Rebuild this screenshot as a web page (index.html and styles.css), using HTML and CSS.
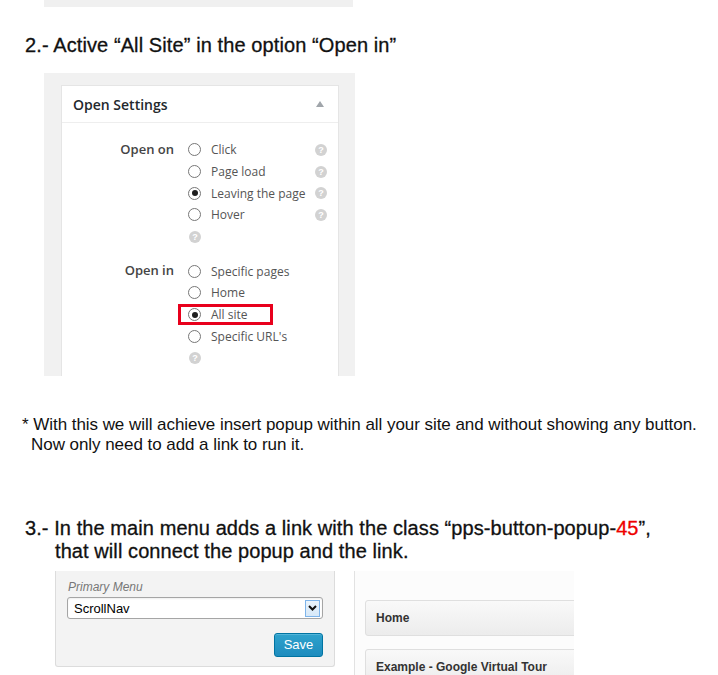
FILE: index.html
```html
<!DOCTYPE html>
<html>
<head>
<meta charset="utf-8">
<link rel="stylesheet" href="styles.css">
</head>
<body>
<div class="topbar"></div>

<h2 class="step">2.- Active “All Site” in the option “Open in”</h2>

<div class="shot shot-settings">
  <div class="postbox">
    <div class="postbox-head">
      <h3>Open Settings</h3>
      <span class="toggle"></span>
    </div>
    <div class="postbox-body">
      <div class="field">
        <div class="field-label">Open on</div>
        <div class="field-options">
          <div class="opt"><span class="radio"></span><span class="opt-text">Click</span><span class="help">?</span></div>
          <div class="opt"><span class="radio"></span><span class="opt-text">Page load</span><span class="help">?</span></div>
          <div class="opt"><span class="radio checked"></span><span class="opt-text">Leaving the page</span><span class="help">?</span></div>
          <div class="opt"><span class="radio"></span><span class="opt-text">Hover</span><span class="help">?</span></div>
          <div class="opt"><span class="help">?</span></div>
        </div>
      </div>
      <div class="field field-gap">
        <div class="field-label">Open in</div>
        <div class="field-options">
          <div class="opt"><span class="radio"></span><span class="opt-text">Specific pages</span></div>
          <div class="opt"><span class="radio"></span><span class="opt-text">Home</span></div>
          <div class="opt marked"><span class="radio checked"></span><span class="opt-text">All site</span><span class="highlight"></span></div>
          <div class="opt"><span class="radio"></span><span class="opt-text">Specific URL's</span></div>
          <div class="opt"><span class="help">?</span></div>
        </div>
      </div>
    </div>
  </div>
</div>

<p class="note">* With this we will achieve insert popup within all your site and without showing any button.<br>Now only need to add a link to run it.</p>

<h2 class="step step3">3.- In the main menu adds a link with the class “pps-button-popup-<span class="red">45</span>”,<br>that will connect the popup and the link.</h2>

<div class="bottom">
  <div class="menu-panel">
    <div class="menu-label">Primary Menu</div>
    <div class="select">
      <span class="select-value">ScrollNav</span>
      <span class="select-btn">
        <svg width="9" height="6" viewBox="0 0 9 6"><polyline points="1,1 4.5,4.5 8,1" fill="none" stroke="#111" stroke-width="2"/></svg>
      </span>
    </div>
    <div class="actions"><span class="btn-save">Save</span></div>
  </div>
  <div class="nav-panel">
    <div class="nav-item">Home</div>
    <div class="nav-item">Example - Google Virtual Tour</div>
  </div>
</div>
</body>
</html>
```

FILE: styles.css
```css
html, body {
  margin: 0;
  padding: 0;
  background: #fff;
  overflow: hidden;
}
body {
  font-family: "Liberation Sans", Arial, sans-serif;
  color: #000;
}
.topbar {
  margin-left: 44px;
  width: 309px;
  height: 7px;
  background: #f0f0f0;
}
.step {
  margin: 27px 0 0 25px;
  font-size: 20px;
  line-height: 22px;
  font-weight: normal;
  color: #111;
  letter-spacing: 0.1px;
  -webkit-text-stroke: 0.3px #111;
  white-space: nowrap;
}
.shot-settings {
  margin: 17px 0 0 44px;
  width: 311px;
  height: 303px;
  box-sizing: border-box;
  padding: 12px 16px 0 17px;
  background: #f1f1f1;
  overflow: hidden;
}
.postbox {
  background: #fff;
  border: 1px solid #e5e5e5;
  border-bottom: none;
  height: 300px;
  font-family: "Open Sans", sans-serif;
}
.postbox-head {
  height: 36px;
  border-bottom: 1px solid #eee;
  display: flex;
  align-items: center;
  justify-content: space-between;
  padding: 0 14px 0 11px;
}
.postbox-head h3 {
  margin: 0;
  font-size: 14px;
  font-weight: 600;
  color: #23282d;
}
.toggle {
  width: 0;
  height: 0;
  border-left: 4px solid transparent;
  border-right: 4px solid transparent;
  border-bottom: 6px solid #a0a5aa;
}
.postbox-body {
  padding: 16px 11px 0 0;
}
.field {
  display: grid;
  grid-template-columns: 112px 1fr;
  column-gap: 14px;
}
.field-gap {
  margin-top: 13px;
}
.field-label {
  text-align: right;
  font-size: 13px;
  font-weight: 600;
  color: #444;
  line-height: 21.7px;
}
.opt {
  position: relative;
  display: flex;
  align-items: center;
  height: 21.7px;
  font-size: 12px;
  color: #555;
}
.radio {
  width: 11px;
  height: 11px;
  border: 1px solid #777;
  border-radius: 50%;
  margin-right: 10px;
  display: flex;
  align-items: center;
  justify-content: center;
  background: #fff;
}
.radio.checked::after {
  content: "";
  width: 6px;
  height: 6px;
  border-radius: 50%;
  background: #1e1e1e;
}
.opt-text {
  white-space: nowrap;
}
.help {
  width: 12px;
  height: 12px;
  border-radius: 50%;
  background: #d2d2d2;
  color: #fff;
  font-size: 9px;
  font-weight: 700;
  line-height: 12px;
  text-align: center;
  margin-left: auto;
  font-family: "Liberation Sans", sans-serif;
}
.opt > .help:only-child {
  margin-left: 1px;
}
.highlight {
  position: absolute;
  left: -10px;
  top: 0;
  width: 89px;
  height: 15px;
  border: 3px solid #e8001c;
}
.note {
  margin: 39px 0 0 0;
  padding-left: 31px;
  text-indent: -9px;
  font-size: 17px;
  line-height: 20px;
  color: #111;
  letter-spacing: -0.05px;
  white-space: nowrap;
}
.step3 {
  margin-top: 62px;
  padding-left: 30px;
  text-indent: -30px;
  line-height: 23px;
  letter-spacing: 0.08px;
}
.red {
  color: #e00;
  -webkit-text-stroke: 0.3px #e00;
}
.bottom {
  margin: 8px 0 0 55px;
  display: flex;
  gap: 19px;
  align-items: flex-start;
}
.menu-panel {
  width: 280px;
  height: 96px;
  box-sizing: border-box;
  background: #f3f3f3;
  border: 1px solid #dcdcdc;
  border-top: none;
  border-radius: 0 0 3px 3px;
  padding: 9px 11px 0 11px;
}
.menu-label {
  font-size: 12px;
  font-style: italic;
  color: #777;
  line-height: 15px;
  padding-left: 1px;
}
.select {
  margin-top: 2px;
  height: 22px;
  box-sizing: border-box;
  background: #fff;
  border: 1px solid #a5a5a5;
  border-radius: 3px;
  display: flex;
  align-items: center;
  justify-content: space-between;
  padding: 0 2px 0 6px;
  box-shadow: inset 0 1px 2px rgba(0,0,0,0.07);
}
.select-value {
  font-size: 13px;
  color: #000;
}
.select-btn {
  width: 15px;
  height: 17px;
  box-sizing: border-box;
  border: 1px solid #7eb4ea;
  background: linear-gradient(#eaf4fc, #d6e8f8);
  display: flex;
  align-items: center;
  justify-content: center;
}
.actions {
  display: flex;
  justify-content: flex-end;
  margin-top: 14px;
}
.btn-save {
  width: 49px;
  height: 24px;
  box-sizing: border-box;
  border: 1px solid #0074a2;
  border-radius: 3px;
  background: linear-gradient(#2ea2cc, #1e8cbe);
  box-shadow: inset 0 1px 0 rgba(120,200,230,0.5);
  color: #fff;
  font-size: 13px;
  line-height: 22px;
  text-align: center;
}
.nav-panel {
  width: 220px;
  height: 110px;
  box-sizing: border-box;
  border-left: 1px solid #e2e2e2;
  background: #fcfcfc;
  padding: 29px 0 0 10px;
  overflow: hidden;
}
.nav-item {
  width: 260px;
  height: 36px;
  box-sizing: border-box;
  border: 1px solid #dfdfdf;
  border-radius: 3px;
  background: linear-gradient(#f9f9f9, #ececec);
  padding-left: 10px;
  font-size: 12px;
  font-weight: bold;
  color: #333;
  line-height: 34px;
  margin-bottom: 13px;
}
```
